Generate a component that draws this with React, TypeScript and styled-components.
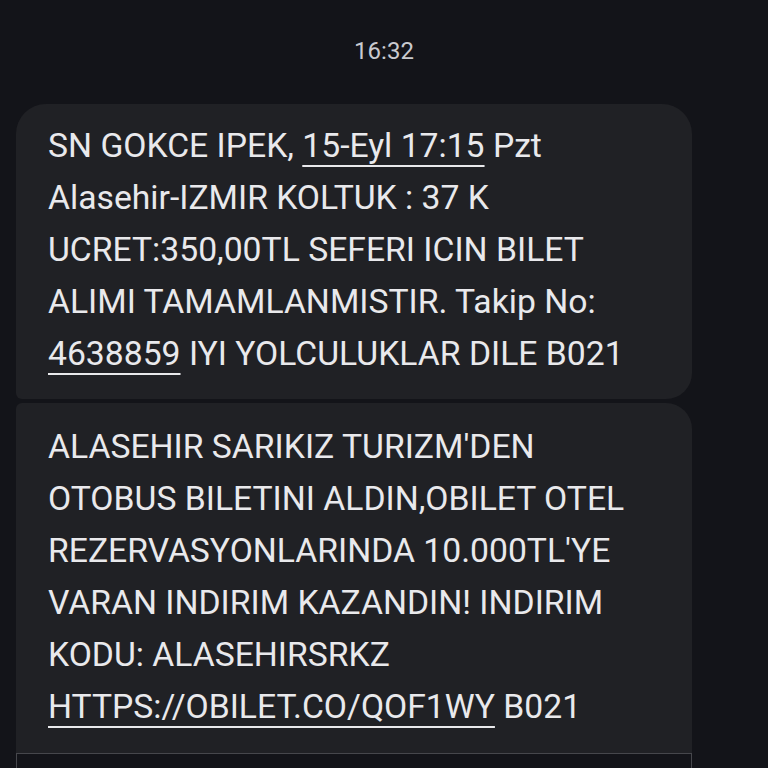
import React from "react"
import styled, { createGlobalStyle } from "styled-components"

const GlobalStyle = createGlobalStyle`
  html, body {
    margin: 0;
    padding: 0;
    background: #131419;
    overflow: hidden;
  }
  body {
    font-family: Roboto, "Noto Sans", sans-serif;
  }
`

const Screen = styled.div`
  width: 768px;
  height: 768px;
  background: #131419;
  display: flex;
  flex-direction: column;
  overflow: hidden;
  & > * {
    flex-shrink: 0;
  }
`

const TimeStamp = styled.div`
  height: 104px;
  display: flex;
  align-items: center;
  justify-content: center;
  color: #c9cacf;
  font-size: 24px;
  padding-bottom: 2px;
  box-sizing: border-box;
`

const Thread = styled.div`
  display: flex;
  flex-direction: column;
  gap: 4px;
  padding-left: 16px;
`

const Bubble = styled.div<{ $first?: boolean; $last?: boolean }>`
  width: 676px;
  box-sizing: border-box;
  background: #202125;
  color: #e9e9ec;
  font-size: 33.7px;
  line-height: 52px;
  padding: ${(p) => (p.$first ? "16px 20px 19px 32px" : "18px 20px 20px 32px")};
  border-radius: ${(p) =>
    p.$first ? "30px 30px 26px 6px" : p.$last ? "6px 26px 0 0" : "6px 26px 26px 6px"};
`

const Line = styled.div`
  white-space: nowrap;
`

const Link = styled.span`
  text-decoration: underline;
  text-decoration-thickness: 2px;
  text-underline-offset: 8px;
`

const ReplyBox = styled.div`
  margin-left: 16px;
  width: 676px;
  height: 40px;
  box-sizing: border-box;
  border: 1px solid #46474c;
  border-bottom: none;
  background: #131419;
`

export default function App() {
  return (
    <>
      <GlobalStyle />
      <Screen>
        <TimeStamp>16:32</TimeStamp>
        <Thread>
          <Bubble $first>
            <Line>
              SN GOKCE IPEK, <Link>15-Eyl 17:15</Link> Pzt
            </Line>
            <Line>Alasehir-IZMIR KOLTUK : 37 K</Line>
            <Line>UCRET:350,00TL SEFERI ICIN BILET</Line>
            <Line>ALIMI TAMAMLANMISTIR. Takip No:</Line>
            <Line>
              <Link>4638859</Link> IYI YOLCULUKLAR DILE B021
            </Line>
          </Bubble>
          <Bubble $last>
            <Line>ALASEHIR SARIKIZ TURIZM'DEN</Line>
            <Line>OTOBUS BILETINI ALDIN,OBILET OTEL</Line>
            <Line>REZERVASYONLARINDA 10.000TL'YE</Line>
            <Line>VARAN INDIRIM KAZANDIN! INDIRIM</Line>
            <Line>KODU: ALASEHIRSRKZ</Line>
            <Line>
              <Link>HTTPS://OBILET.CO/QOF1WY</Link> B021
            </Line>
          </Bubble>
        </Thread>
        <ReplyBox />
      </Screen>
    </>
  )
}
